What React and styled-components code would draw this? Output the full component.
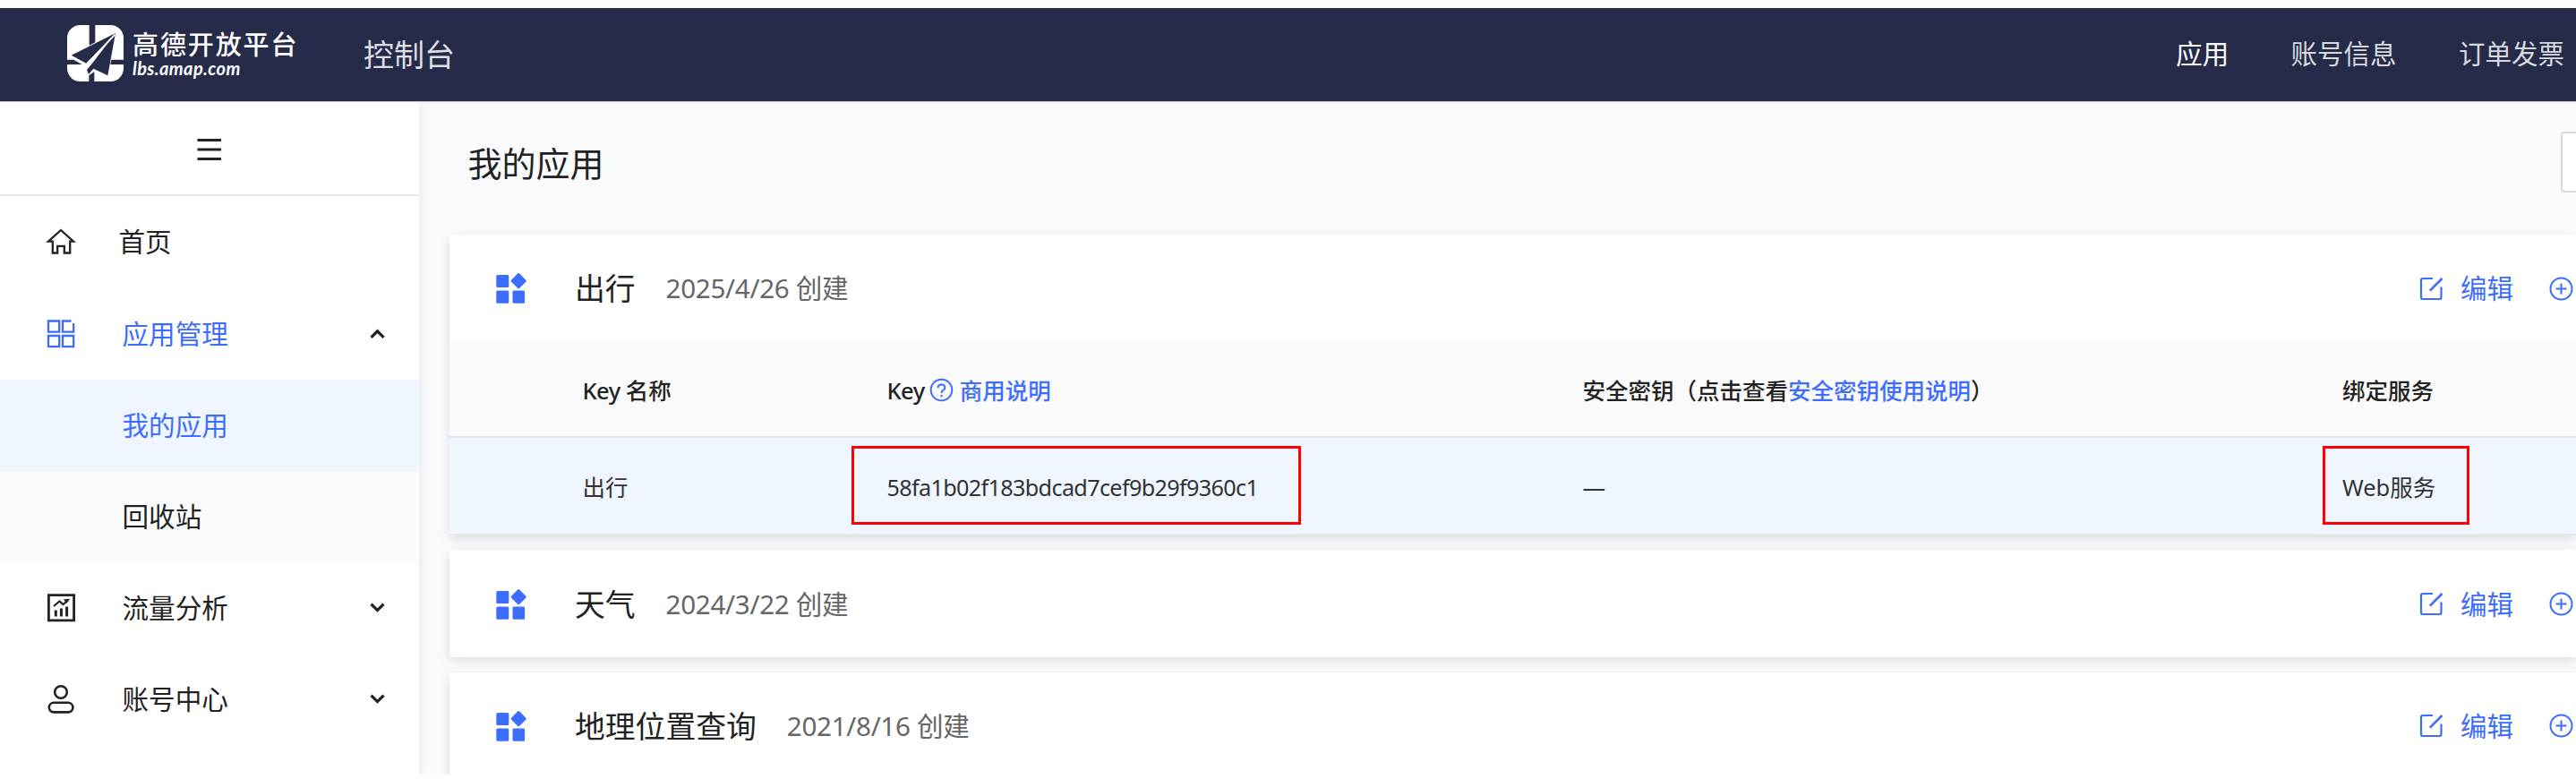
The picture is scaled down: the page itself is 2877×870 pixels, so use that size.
import React from "react";
import styled, { createGlobalStyle } from "styled-components";

const GlobalStyle = createGlobalStyle`
  *, *::before, *::after { box-sizing: border-box; }
  html, body { margin: 0; padding: 0; background: #fff; overflow: hidden; }
  body { font-family: "Noto Sans", "Noto Sans CJK SC", sans-serif; color: #222; }
  svg { display: block; flex: none; }
`;

const BLUE = "#3d6dff";

const Page = styled.div`
  width: 2877px;
  height: 870px;
  padding-top: 9px;
  overflow: hidden;
`;

const Header = styled.header`
  display: flex;
  align-items: center;
  height: 105px;
  padding: 0 13px 1px 75px;
  background: #272b4a;
  border-bottom: 1px solid #c5c5d8;
`;

const Brand = styled.div`
  display: flex;
  align-items: center;
  width: 331px;
  padding-bottom: 2px;
`;

const BrandText = styled.div`
  margin-left: 10px;
  color: #fff;
  white-space: nowrap;
`;

const BrandName = styled.div`
  font-size: 29px;
  font-weight: 500;
  line-height: 32px;
  letter-spacing: 1.9px;
`;

const BrandDomain = styled.div`
  font-family: Lato, sans-serif;
  font-size: 20px;
  font-weight: 700;
  font-style: italic;
  line-height: 20px;
  letter-spacing: 0.4px;
`;

const ConsoleTitle = styled.div`
  font-size: 34px;
  line-height: 50px;
  color: #dddde3;
`;

const TopNav = styled.nav`
  display: flex;
  gap: 69.4px;
  margin-left: auto;
  padding-bottom: 1px;
`;

const TopLink = styled.a`
  font-size: 29.5px;
  line-height: 44px;
  white-space: nowrap;
  color: ${(p) => (p.$active ? "#fff" : "#d8d8df")};
`;

const Body = styled.div`
  display: flex;
  height: 751px;
  overflow: hidden;
`;

const Sidebar = styled.aside`
  position: relative;
  flex: none;
  width: 467.5px;
  background: #fff;
  box-shadow: 2px 0 12px rgba(0, 0, 0, 0.08);
`;

const Toggle = styled.div`
  display: flex;
  justify-content: center;
  align-items: center;
  height: 105.3px;
  padding-top: 2px;
  border-bottom: 2px solid #e8e8e8;
`;

const MenuRow = styled.div`
  display: flex;
  align-items: center;
  height: 102.2px;
  padding: 0 38px 0 51px;
  background: ${(p) => p.$bg || "transparent"};
  color: ${(p) => (p.$active ? BLUE : "#222")};
`;

const IconSlot = styled.span`
  display: flex;
  width: ${(p) => p.$w || 85.5}px;
`;

const MenuLabel = styled.span`
  flex: 1;
  font-size: 29.6px;
  line-height: 44px;
`;

const Main = styled.main`
  flex: 1;
  min-width: 0;
  background: #fafbfd;
  padding-left: 34px;
`;

const TitleBar = styled.div`
  display: flex;
  align-items: flex-start;
  justify-content: space-between;
  height: 148px;
  padding: 33px 0 0 21px;
`;

const PageTitle = styled.h1`
  margin: 8px 0 0;
  font-size: 38px;
  line-height: 54px;
  font-weight: 400;
`;

const SearchBox = styled.div`
  width: 17px;
  height: 68px;
  background: #fff;
  border: 2px solid #d9d9d9;
  border-right: 0;
  border-radius: 4px 0 0 4px;
`;

const Card = styled.section`
  margin-bottom: ${(p) => p.$gap || 17}px;
  background: #fff;
  box-shadow: 0 4px 12px rgba(0, 0, 0, 0.13);
`;

const CardHead = styled.div`
  display: flex;
  align-items: center;
  height: 119.3px;
  padding: 1px 3px 0 52.5px;
`;

const AppName = styled.div`
  margin-left: 53px;
  font-size: 33.8px;
  line-height: 48px;
`;

const AppDate = styled.div`
  margin-left: 34px;
  font-size: 29.6px;
  line-height: 44px;
  letter-spacing: -0.3px;
  color: #666;
`;

const Actions = styled.div`
  display: flex;
  align-items: center;
  margin-left: auto;
  color: ${BLUE};
`;

const EditLabel = styled.span`
  margin: 0 40px 0 18.5px;
  font-size: 29.5px;
  line-height: 44px;
`;

const TableRow = styled.div`
  display: grid;
  grid-template-columns: 340px 777px 848.5px 1fr;
  align-items: center;
  height: ${(p) => p.$h}px;
  padding: 3px 0 0 149px;
  background: ${(p) => p.$bg};
  border-bottom: ${(p) => p.$line}px solid #e7e8ea;
  font-size: 25.5px;
  line-height: 38px;
  font-weight: ${(p) => (p.$head ? 500 : 400)};
  color: ${(p) => (p.$head ? "#222" : "#333")};
`;

const Cell = styled.div`
  display: flex;
  align-items: center;
  white-space: nowrap;
`;

const Latin = styled.span`
  letter-spacing: -0.5px;
`;

const KeyValue = styled.span`
  font-size: 25.2px;
  letter-spacing: -0.66px;
`;

const Link = styled.a`
  color: ${BLUE};
`;

const HelpSlot = styled.span`
  margin: 0 7px 0 5px;
  color: ${BLUE};
`;

const Marked = styled.div`
  position: relative;
  &::after {
    content: "";
    position: absolute;
    left: ${(p) => p.$left}px;
    top: -27px;
    width: ${(p) => p.$w}px;
    height: 88px;
    border: 3px solid #f00;
  }
`;

const Logo = () => (
  <svg width="63" height="63" viewBox="0 0 189 189">
    <rect width="189" height="189" rx="44" fill="#fff" />
    <g fill="#272b4a">
      <path d="M74 0h20v58L74 68z" />
      <path d="M0 116h22l28 16H0z" />
      <path d="M148 116h41v16h-44z" />
      <path d="M73 189v-20l18-13v33z" />
      <path d="M14 101L162 27L64 128z" />
      <path d="M162 27L136 169L88 146L72 165L66 150L84 128z" />
    </g>
    <path d="M160 32L66 130L66 146" fill="none" stroke="#fff" strokeWidth="5" />
  </svg>
);

const MenuIcon = () => (
  <svg width="28" height="26" viewBox="0 0 28 26" stroke="#222" strokeWidth="3">
    <path d="M0.5 2.5H27M0.5 13H27M0.5 23.5H27" />
  </svg>
);

const HomeIcon = () => (
  <svg width="34" height="30" viewBox="0 0 34 30" fill="none" stroke="currentColor" strokeWidth="2.3">
    <path d="M17 2L31 14.6H27.2V27.5H20.8V19.8H13.2V27.5H7.8V14.6H3L17 2z" />
  </svg>
);

const GridIcon = () => (
  <svg width="34" height="32" viewBox="0 0 34 32" fill="none" stroke="currentColor" strokeWidth="2.3">
    <path d="M3 1.5H15.2V13.6H3zM3 18H15.2V30.2H3zM19 18H31.2V30.2H19z" />
    <path d="M28.5 1.5H19V13.6H31.2V4" />
  </svg>
);

const ChartIcon = () => (
  <svg width="34" height="32" viewBox="0 0 34 32" fill="none" stroke="currentColor">
    <path d="M3.4 1.7H31.6V29.9H3.4z" strokeWidth="2.8" />
    <path d="M9 14L15.5 8.5L19.5 12L25 7.5" strokeWidth="2.2" />
    <path d="M20 6.3L27.3 5.7L23 11z" fill="currentColor" stroke="none" />
    <path d="M11.3 18.5V25.5M17.4 16.5V25.5M23.6 14.5V25.5" strokeWidth="3" />
  </svg>
);

const UserIcon = () => (
  <svg width="34" height="34" viewBox="0 0 34 34" fill="none" stroke="currentColor" strokeWidth="2.6">
    <circle cx="17" cy="9" r="6.8" />
    <rect x="3.8" y="20.8" width="26.6" height="10.6" rx="5.3" />
  </svg>
);

const Chevron = ({ up }) => (
  <svg width="17" height="12" viewBox="0 0 17 12" fill="none" stroke="#222" strokeWidth="3.2">
    <path d={up ? "M1.5 9.8L8.5 2.8L15.5 9.8" : "M1.5 1.6L8.5 8.6L15.5 1.6"} />
  </svg>
);

const AppIcon = () => (
  <svg width="35" height="36" viewBox="0 0 35 36" fill={BLUE}>
    <rect x="0.3" y="3" width="14" height="14" rx="1.5" />
    <rect x="0.3" y="20.5" width="14" height="14.3" rx="1.5" />
    <rect x="18.5" y="20.5" width="13.6" height="14.3" rx="1.5" />
    <rect x="18.7" y="3.2" width="13" height="13" rx="1.5" transform="rotate(45 25.2 9.7)" />
  </svg>
);

const EditIcon = () => (
  <svg width="27" height="27" viewBox="0 0 27 27" fill="none" stroke="currentColor" strokeWidth="2.2">
    <path d="M15 2H4Q2 2 2 4V23Q2 25 4 25H22.5Q24.5 25 24.5 23V11.5" />
    <path d="M25.5 2L11.8 15.7" strokeWidth="2.6" />
  </svg>
);

const PlusIcon = () => (
  <svg width="27" height="27" viewBox="0 0 27 27" fill="none" stroke="currentColor" strokeWidth="2">
    <circle cx="13.5" cy="13.5" r="12" />
    <path d="M7.5 13.5H19.5M13.5 7.5V19.5" />
  </svg>
);

const HelpIcon = () => (
  <svg width="27" height="27" viewBox="0 0 27 27" fill="none" stroke="currentColor" strokeWidth="2">
    <circle cx="13.5" cy="13.5" r="11.8" />
    <path d="M9.6 11.2Q9.6 7.6 13.5 7.6Q17.3 7.6 17.3 10.9Q17.3 12.7 15.2 13.8Q13.5 14.8 13.5 17" />
    <path d="M13.5 19V21.2" strokeWidth="2.2" />
  </svg>
);

const AppHead = ({ name, date }) => (
  <CardHead>
    <AppIcon />
    <AppName>{name}</AppName>
    <AppDate>{date} 创建</AppDate>
    <Actions>
      <EditIcon />
      <EditLabel>编辑</EditLabel>
      <PlusIcon />
    </Actions>
  </CardHead>
);

export default function App() {
  return (
    <Page>
      <GlobalStyle />
      <Header>
        <Brand>
          <Logo />
          <BrandText>
            <BrandName>高德开放平台</BrandName>
            <BrandDomain>lbs.amap.com</BrandDomain>
          </BrandText>
        </Brand>
        <ConsoleTitle>控制台</ConsoleTitle>
        <TopNav>
          <TopLink $active>应用</TopLink>
          <TopLink>账号信息</TopLink>
          <TopLink>订单发票</TopLink>
        </TopNav>
      </Header>
      <Body>
        <Sidebar>
          <Toggle><MenuIcon /></Toggle>
          <MenuRow>
            <IconSlot $w={81.5}><HomeIcon /></IconSlot>
            <MenuLabel>首页</MenuLabel>
          </MenuRow>
          <MenuRow $active>
            <IconSlot><GridIcon /></IconSlot>
            <MenuLabel>应用管理</MenuLabel>
            <Chevron up />
          </MenuRow>
          <MenuRow $active $bg="#eff6ff">
            <IconSlot />
            <MenuLabel>我的应用</MenuLabel>
          </MenuRow>
          <MenuRow $bg="#fafbfd">
            <IconSlot />
            <MenuLabel>回收站</MenuLabel>
          </MenuRow>
          <MenuRow>
            <IconSlot><ChartIcon /></IconSlot>
            <MenuLabel>流量分析</MenuLabel>
            <Chevron />
          </MenuRow>
          <MenuRow>
            <IconSlot><UserIcon /></IconSlot>
            <MenuLabel>账号中心</MenuLabel>
            <Chevron />
          </MenuRow>
        </Sidebar>
        <Main>
          <TitleBar>
            <PageTitle>我的应用</PageTitle>
            <SearchBox />
          </TitleBar>
          <Card $gap={16}>
            <AppHead name="出行" date="2025/4/26" />
            <TableRow $head $h={108.2} $line={2} $bg="#fafafa">
              <Cell><Latin>Key&nbsp;</Latin>名称</Cell>
              <Cell>
                <Latin>Key</Latin>
                <HelpSlot><HelpIcon /></HelpSlot>
                <Link>商用说明</Link>
              </Cell>
              <Cell>安全密钥（点击查看<Link>安全密钥使用说明</Link>）</Cell>
              <Cell>绑定服务</Cell>
            </TableRow>
            <TableRow $h={109} $line={2} $bg="#eff6ff">
              <Cell>出行</Cell>
              <Cell>
                <Marked $left={-39.5} $w={501.5}>
                  <KeyValue>58fa1b02f183bdcad7cef9b29f9360c1</KeyValue>
                </Marked>
              </Cell>
              <Cell>—</Cell>
              <Cell>
                <Marked $left={-22.5} $w={164}>Web服务</Marked>
              </Cell>
            </TableRow>
          </Card>
          <Card>
            <AppHead name="天气" date="2024/3/22" />
          </Card>
          <Card>
            <AppHead name="地理位置查询" date="2021/8/16" />
          </Card>
        </Main>
      </Body>
    </Page>
  );
}
